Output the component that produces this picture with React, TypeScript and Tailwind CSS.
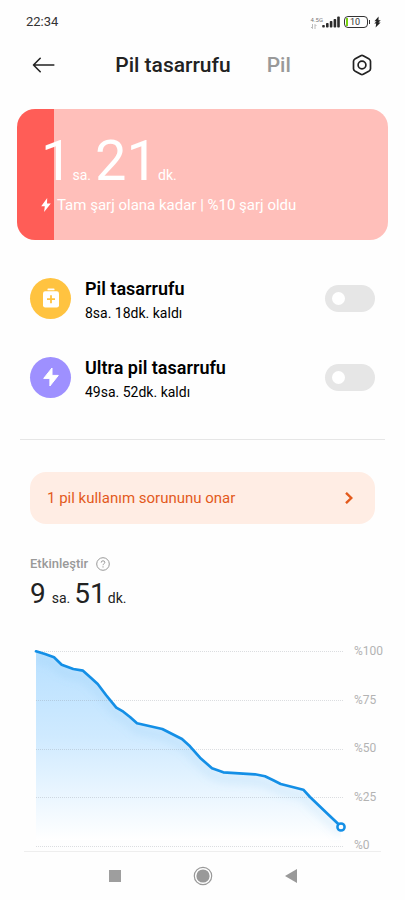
import React from 'react';

const levels = ['%100', '%75', '%50', '%25', '%0'];
const gridLines = [6, 55, 104, 152, 201];

// battery level over time, from full down to 10%
const line =
  'M6 6.3 L15 9 L24 12.3 L31.7 19.7 L43.3 24 L53 25.7 L60 32 L67.7 39 L76 50 L86.3 62.7 L93.3 66.7 L100 72 L107 78.3 L132.3 84 L152 94 L160 101.3 L170 112.7 L182 123.3 L193.3 127.3 L225 129.3 L235 131.3 L243.3 135.3 L250.7 139 L273.3 144.7 L280 152 L296.7 168 L308.3 179 L311 182';

function StatusBar() {
  return (
    <div className="flex h-11 items-center justify-between pr-6 pl-[26px]">
      <span className="text-[13px] text-[#333]">22:34</span>
      <div className="flex items-center">
        <div className="flex flex-col text-[6px] leading-[8px] text-[#777]">
          <span>4.5G</span>
          <svg width="6" height="5" viewBox="0 0 6 5" fill="none" stroke="#aaa" strokeWidth="0.8">
            <path d="M1.5 0v4.5L0 3M4 5V.5L5.5 2" />
          </svg>
        </div>
        <svg className="-ml-px" width="18" height="12" viewBox="0 0 18 12" fill="#2b2b2b">
          <rect x="0.2" y="9" width="2.6" height="2.6" rx="0.8" />
          <rect x="4" y="7" width="2.6" height="4.6" rx="0.8" />
          <rect x="7.8" y="5" width="2.6" height="6.6" rx="0.8" />
          <rect x="11.6" y="3" width="2.6" height="8.6" rx="0.8" />
          <rect x="15.2" y="0.6" width="2.6" height="11" rx="0.8" />
        </svg>
        <div className="ml-1 flex h-3 w-6 items-center rounded-[4px] border-[1.5px] border-[#333] pl-px text-[9px] leading-none text-[#333]">
          <span className="mr-0.5 h-2 w-0.5 bg-[#78d20f]" />
          10
        </div>
        <span className="ml-px h-1 w-px bg-[#333]" />
        <svg className="ml-1" width="7" height="12" viewBox="0 0 7 12" fill="#222">
          <path d="M4.6 0.5 0.4 5.2h2.2L0.2 7.4h2L1.6 11.5 6.6 6.4H4.4L6.8 4.2H4.5z" />
        </svg>
      </div>
    </div>
  );
}

function Header() {
  return (
    <header className="flex h-[42px] items-center pr-8 pl-8">
      <button type="button" aria-label="Geri">
        <svg width="23" height="16" viewBox="0 0 23 16" fill="none" stroke="#222" strokeWidth="1.6" strokeLinecap="round" strokeLinejoin="round">
          <path d="M21.8 8H1.5M8.2 1.3 1.5 8l6.7 6.7" />
        </svg>
      </button>
      <nav className="flex flex-1 items-center justify-center gap-9 text-[21px] leading-6">
        <a href="#tasarruf" className="font-medium text-[#222]">Pil tasarrufu</a>
        <a href="#pil" className="font-medium text-[#999]">Pil</a>
      </nav>
      <button type="button" aria-label="Ayarlar">
        <svg width="22" height="22" viewBox="0 0 22 22" fill="none" stroke="#222" strokeWidth="1.7" strokeLinejoin="round">
          <path d="M9.8 1.7q1.2-.7 2.4 0l6 3.4q1.3.8 1.3 2.2v7.4q0 1.4-1.3 2.2l-6 3.4q-1.2.7-2.4 0l-6-3.4q-1.3-.8-1.3-2.2V7.3q0-1.4 1.3-2.2z" />
          <circle cx="11" cy="11" r="3.9" />
        </svg>
      </button>
    </header>
  );
}

function ChargeCard() {
  return (
    <section className="mx-[17px] mt-[23px] h-[131px] rounded-[18px] bg-linear-to-r from-[#ff5d57] from-10% to-[#ffbfba] to-10% px-6 pt-[22px] text-white">
      <div className="flex items-baseline">
        <span className="text-[56px] leading-[60px]">1</span>
        <span className="text-[14px] leading-4">sa.</span>
        <span className="ml-1 text-[56px] leading-[60px]">21</span>
        <span className="text-[14px] leading-4">dk.</span>
      </div>
      <p className="mt-1 flex items-center gap-1.5 text-[15px] leading-5">
        <svg width="10" height="14" viewBox="0 0 10 14" fill="currentColor">
          <path d="M6.2 0 .2 8.2h3.6L3.1 14 9.8 5.5H6z" />
        </svg>
        Tam şarj olana kadar | %10 şarj oldu
      </p>
    </section>
  );
}

function ModeRow({ id, title, left, color, children }: { id: string; title: string; left: string; color: string; children: React.ReactNode }) {
  return (
    <div className="flex items-center">
      <div className={'flex size-[41px] items-center justify-center rounded-full ' + color}>{children}</div>
      <label htmlFor={id} className="ml-3.5 flex-1 pt-1.5 text-black">
        <span className="block text-[18px] leading-6 font-semibold">{title}</span>
        <span className="block text-[14px] leading-6">{left}</span>
      </label>
      <input
        id={id}
        type="checkbox"
        role="switch"
        className="flex h-[27px] w-[50px] cursor-pointer appearance-none items-center rounded-full bg-[#e6e6e6] px-[7px] before:size-[13px] before:rounded-full before:bg-white checked:justify-end checked:bg-[#0d84ff]"
      />
    </div>
  );
}

function BatteryChart() {
  return (
    <div className="mt-[33px] flex pr-5 pl-[30px]">
      <svg className="min-w-0 flex-1" viewBox="0 0 318 206" fill="none">
        <defs>
          <linearGradient id="area" x1="0" y1="0" x2="0" y2="1">
            <stop offset="0" stopColor="#b8e0ff" />
            <stop offset="0.45" stopColor="#cfeaff" />
            <stop offset="1" stopColor="#ffffff" />
          </linearGradient>
          <clipPath id="below">
            <path d={line + ' V206 H6 Z'} />
          </clipPath>
          <filter id="soft" x="-10%" y="-10%" width="120%" height="130%">
            <feGaussianBlur stdDeviation="4" />
          </filter>
        </defs>
        <path d={line + ' V195 H6 Z'} fill="url(#area)" />
        <g clipPath="url(#below)">
          <path d={line} transform="translate(0 7)" stroke="#7fbfec" strokeOpacity="0.2" strokeWidth="6" filter="url(#soft)" />
        </g>
        {gridLines.map((y) => (
          <path key={y} d={`M6 ${y + 0.5}H313`} stroke="#8a939a" strokeOpacity="0.3" strokeWidth="1" strokeDasharray="1 1" />
        ))}
        <path d={line} stroke="#148fe6" strokeWidth="2.7" strokeLinejoin="round" strokeLinecap="round" />
        <circle cx="311" cy="182" r="3.6" fill="#fff" stroke="#148fe6" strokeWidth="2.5" />
      </svg>
      <div className="ml-1.5 flex w-[31px] flex-col justify-between text-[12px] leading-3 text-[#b3b3b3]">
        {levels.map((l) => (
          <span key={l}>{l}</span>
        ))}
      </div>
    </div>
  );
}

function NavBar() {
  return (
    <div className="flex h-12 items-center justify-center gap-11">
      <button type="button" aria-label="Son uygulamalar" className="flex w-11 justify-center">
        <span className="size-3 bg-[#9e9e9e]" />
      </button>
      <button type="button" aria-label="Ana ekran" className="flex w-11 justify-center">
        <svg width="20" height="20" viewBox="0 0 20 20">
          <circle cx="10" cy="10" r="8.7" fill="none" stroke="#999" strokeWidth="1.2" />
          <circle cx="10" cy="10" r="6.6" fill="#999" />
        </svg>
      </button>
      <button type="button" aria-label="Geri git" className="flex w-11 justify-center">
        <svg width="12" height="14" viewBox="0 0 12 14" fill="#999">
          <path d="M12 0v14L0 7z" />
        </svg>
      </button>
    </div>
  );
}

export default function App() {
  return (
    <div className="min-h-screen bg-[#fefefe] font-[Roboto,'Noto_Sans',sans-serif]">
      <StatusBar />
      <Header />
      <main>
        <ChargeCard />
        <div className="mt-[31px] flex flex-col gap-[25px] px-[30px]">
          <ModeRow id="saver" title="Pil tasarrufu" left="8sa. 18dk. kaldı" color="bg-[#ffc340]">
            <svg width="16" height="20" viewBox="0 0 16 20">
              <rect x="4.5" y="0.5" width="7" height="1.8" rx="0.6" fill="#fff" />
              <rect x="0" y="3.2" width="16" height="16.3" rx="2.2" fill="#fff" />
              <path d="M8 7.2v8M4 11.2h8" stroke="#ffc340" strokeWidth="1.8" />
            </svg>
          </ModeRow>
          <ModeRow id="ultra" title="Ultra pil tasarrufu" left="49sa. 52dk. kaldı" color="bg-[#9e90ff]">
            <svg width="16" height="20" viewBox="0 0 16 20" fill="#fff" stroke="#fff" strokeLinejoin="round">
              <path d="M9 1 .7 11.4h6.2V19L15.3 8.4H9z" />
            </svg>
          </ModeRow>
        </div>

        <hr className="mx-5 mt-[35px] border-[#e6e6e6]" />

        <button type="button" className="mx-[30px] mt-8 flex h-[52px] w-[calc(100%-60px)] items-center justify-between rounded-2xl bg-[#ffede4] pr-[22px] pl-[17px] text-[15px] text-[#e35a1c]">
          1 pil kullanım sorununu onar
          <svg width="8" height="12" viewBox="0 0 8 12" fill="none" stroke="currentColor" strokeWidth="2.4">
            <path d="M1 .8 6.3 6 1 11.2" />
          </svg>
        </button>

        <section className="mt-8 px-[30px]">
          <h2 className="flex items-center gap-2 text-[13px] leading-4 font-medium text-[#999]">
            Etkinleştir
            <svg width="14" height="14" viewBox="0 0 14 14" fill="none" stroke="#999">
              <circle cx="7" cy="7" r="6.3" />
              <path d="M5.2 5.6q0-1.8 1.8-1.8t1.8 1.6q0 .9-1 1.5-.8.5-.8 1.3M7 9.3v1.2" />
            </svg>
          </h2>
          <p className="mt-1 flex items-baseline text-[#222]">
            <span className="text-[28px] leading-9">9</span>
            <span className="ml-1.5 text-[14px] leading-4">sa.</span>
            <span className="ml-1 text-[28px] leading-9">51</span>
            <span className="ml-0.5 text-[14px] leading-4">dk.</span>
          </p>
        </section>
        <BatteryChart />
      </main>
      <hr className="mx-6 border-[#eee]" />
      <NavBar />
    </div>
  );
}
